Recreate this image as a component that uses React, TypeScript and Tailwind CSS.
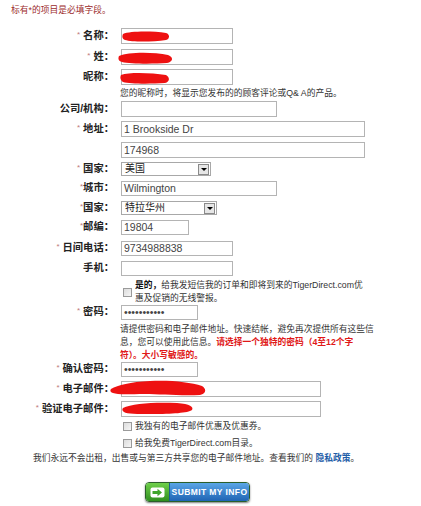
import React from 'react'

const font = { fontFamily: '"Liberation Sans", "Noto Sans CJK SC", sans-serif' }

function Star({ tight }: { tight?: boolean }) {
  return <span className={`text-[8px] font-normal text-[#c07a7a] align-top ${tight ? '' : 'mr-[3px]'}`}>*</span>
}

function Label({ text, star, tight }: { text: string; star?: boolean; tight?: boolean }) {
  return (
    <div className="w-[114px] shrink-0 text-right text-[10.3px] font-bold text-[#222] leading-none whitespace-nowrap">
      {star && <Star tight={tight} />}
      {text}
    </div>
  )
}

// red marker blob that hides personal data
function Scribble({ w, h, d, className }: { w: number; h: number; d: string; className: string }) {
  return (
    <svg className={`absolute pointer-events-none ${className}`} width={w} height={h} viewBox={`0 0 ${w} ${h}`}>
      <path d={d} fill="#ee1111" />
    </svg>
  )
}

function Input({ w, h = 'h-[16px]', value, scribble }: { w: string; h?: string; value?: string; scribble?: React.ReactNode }) {
  return (
    <div className={`relative ${w} ${h} ml-[7px] border border-[#b4b4b4] bg-white flex items-center px-[2px] text-[10.5px] text-[#444] leading-none`}>
      {value}
      {scribble}
    </div>
  )
}

function Select({ w, value }: { w: string; value: string }) {
  return (
    <div className={`${w} h-[14px] ml-[7px] border border-[#a8a8a8] bg-white flex items-center justify-between pl-[3px] text-[10px] text-[#222] leading-none`}>
      <span>{value}</span>
      <div className="w-[11px] h-[11px] mr-[1px] border border-[#8a8a8a] bg-[#e6e6e6] flex items-center justify-center">
        <div className="w-0 h-0 border-l-[3px] border-r-[3px] border-t-[3px] border-l-transparent border-r-transparent border-t-black" />
      </div>
    </div>
  )
}

function Checkbox() {
  return <div className="w-[9px] h-[9px] shrink-0 border border-[#9a9a9a] bg-gradient-to-br from-[#dcdcdc] to-[#f6f6f6]" />
}

function Row({ label, star, tight, mt, children }: { label?: string; star?: boolean; tight?: boolean; mt: string; children: React.ReactNode }) {
  return (
    <div className={`flex items-center ${mt}`}>
      <Label text={label ?? ''} star={star} tight={tight} />
      {children}
    </div>
  )
}

export default function App() {
  return (
    <div className="w-[421px] h-[506px] bg-white overflow-hidden pt-[4px]" style={font}>
      <div className="pl-[11px] text-[8.75px] leading-[12px] text-[#9b2b2b]">标有*的项目是必填字段。</div>

      <Row label="名称：" star mt="mt-[12px]">
        <Input w="w-[112px]" scribble={<Scribble className="left-[0px] top-[2px]" w={48} h={11} d="M1 3 C8 0 30 0 44 2 C48 3 48 8 44 9 C30 11 10 11 3 9 C0 8 0 5 1 3Z" />} />
      </Row>
      <Row label="姓：" star mt="mt-[5px]">
        <Input w="w-[112px]" scribble={<Scribble className="left-[-4px] top-[2px]" w={56} h={12} d="M1 4 C10 0 35 0 50 3 C56 5 55 10 49 11 C35 12 12 12 4 10 C0 9 0 6 1 4Z" />} />
      </Row>
      <Row label="昵称：" mt="mt-[4px]">
        <Input w="w-[112px]" scribble={<Scribble className="left-[-2px] top-[2px]" w={50} h={12} d="M1 3 C10 0 32 1 46 3 C50 5 50 10 45 11 C30 12 10 12 3 10 C0 8 0 5 1 3Z" />} />
      </Row>
      <div className="ml-[120px] mt-[2px] text-[8.75px] leading-[12px] text-[#333] whitespace-nowrap">您的昵称时，将显示您发布的的顾客评论或Q&amp; A的产品。</div>

      <Row label="公司/机构：" mt="mt-[2px]">
        <Input w="w-[156px]" />
      </Row>
      <Row label="地址：" star mt="mt-[4px]">
        <Input w="w-[244px]" value="1 Brookside Dr" />
      </Row>
      <Row mt="mt-[5px]">
        <Input w="w-[244px]" value="174968" />
      </Row>
      <Row label="国家：" star mt="mt-[4px]">
        <Select w="w-[90px]" value="美国" />
      </Row>
      <Row label="城市：" star tight mt="mt-[5px]">
        <Input w="w-[156px]" h="h-[15px]" value="Wilmington" />
      </Row>
      <Row label="国家：" star tight mt="mt-[5px]">
        <Select w="w-[96px]" value="特拉华州" />
      </Row>
      <Row label="邮编：" star tight mt="mt-[5px]">
        <Input w="w-[68px]" h="h-[15px]" value="19804" />
      </Row>
      <Row label="日间电话：" star mt="mt-[6px]">
        <Input w="w-[112px]" h="h-[15px]" value="9734988838" />
      </Row>
      <Row label="手机：" mt="mt-[5px]">
        <Input w="w-[112px]" h="h-[15px]" />
      </Row>

      <div className="flex items-center ml-[123px] mt-[3px] gap-[3px]">
        <Checkbox />
        <div className="text-[8.75px] leading-[13px] text-[#333] whitespace-nowrap">
          <b className="text-[#111]">是的，</b>给我发短信我的订单和即将到来的TigerDirect.com优<br />
          惠及促销的无线警报。
        </div>
      </div>

      <Row label="密码：" star mt="mt-[0px]">
        <Input w="w-[77px]" h="h-[15px]" value="•••••••••••" />
      </Row>
      <div className="ml-[120px] mt-[3px] text-[8.75px] leading-[13px] text-[#333] whitespace-nowrap">
        请提供密码和电子邮件地址。快速结帐，避免再次提供所有这些信<br />
        息，您可以使用此信息。<b className="text-[#e01818]">请选择一个独特的密码（4至12个字</b><br />
        <b className="text-[#e01818]">符）。大小写敏感的。</b>
      </div>

      <Row label="确认密码：" star mt="mt-[0px]">
        <Input w="w-[77px]" h="h-[15px]" value="•••••••••••" />
      </Row>
      <Row label="电子邮件：" star mt="mt-[4px]">
        <Input w="w-[200px]" scribble={<Scribble className="left-[-12px] top-[-2px]" w={96} h={17} d="M1 9 C8 5 20 2 40 1 C60 0 80 2 92 6 C97 9 96 14 90 15 C70 16 50 14 35 14 C20 14 8 15 3 13 C0 12 0 10 1 9Z" />} />
      </Row>
      <Row label="验证电子邮件：" star mt="mt-[4px]">
        <Input w="w-[200px]" scribble={<Scribble className="left-[0px] top-[0px]" w={72} h={13} d="M1 6 C10 1 35 0 55 1 C68 2 72 5 70 8 C66 11 50 12 30 12 C15 12 5 12 2 10 C0 9 0 7 1 6Z" />} />
      </Row>

      <div className="flex items-center ml-[123px] mt-[2px] gap-[3px]">
        <Checkbox />
        <span className="text-[8.75px] leading-[14px] text-[#333]">我独有的电子邮件优惠及优惠券。</span>
      </div>
      <div className="flex items-center ml-[123px] mt-[3px] gap-[3px]">
        <Checkbox />
        <span className="text-[8.75px] leading-[14px] text-[#333]">给我免费TigerDirect.com目录。</span>
      </div>

      <div className="ml-[33px] mt-[2px] text-[8.75px] leading-[13px] text-[#333] whitespace-nowrap">
        我们永远不会出租，出售或与第三方共享您的电子邮件地址。查看我们的 <b className="text-[#1f5ea8]">隐私政策</b>。
      </div>

      <div className="flex justify-center mt-[17px] pr-[26px]">
        <div className="flex h-[20px] w-[105px] rounded-[4px] overflow-hidden border border-[#2b5f2b] shadow-[0_1px_2px_rgba(0,0,0,0.5)]">
          <div className="w-[24px] flex items-center justify-center bg-gradient-to-b from-[#6fd04a] to-[#2f8f1e] border-r border-[#1d5f8f]">
            <svg width="15" height="11" viewBox="0 0 15 11">
              <rect x="0.5" y="0.5" width="14" height="10" rx="2" fill="#ffffff" />
              <path d="M2.5 4 H7.5 V1.8 L12 5.5 L7.5 9.2 V7 H2.5 Z" fill="#3fa52a" />
            </svg>
          </div>
          <div className="flex-1 flex items-center justify-center bg-gradient-to-b from-[#5aa6e6] to-[#1f64b4] text-white text-[8.5px] font-bold tracking-[0.4px]">
            SUBMIT MY INFO
          </div>
        </div>
      </div>
    </div>
  )
}
